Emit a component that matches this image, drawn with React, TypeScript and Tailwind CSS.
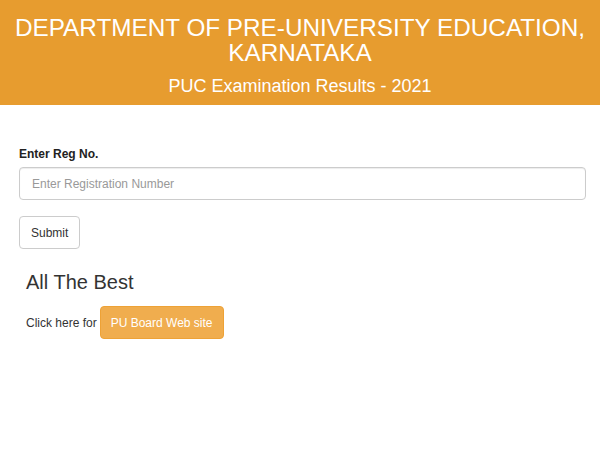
import React from "react";

export default function App() {
  return (
    <div className="w-[600px] h-[450px] bg-white font-['Liberation_Sans',Arial,sans-serif] text-[#333]">
      <header className="bg-[#e79c2f] text-white text-center pt-[15px] pb-[9px]">
        <h1 className="text-[24.3px] leading-[25px] font-normal">
          DEPARTMENT OF PRE-UNIVERSITY EDUCATION, KARNATAKA
        </h1>
        <p className="mt-[11px] text-[18px] leading-[20px]">PUC Examination Results - 2021</p>
      </header>

      <main className="pl-[19px] pr-[14px]">
        <label className="block mt-[41px] text-[12px] leading-[16px] font-bold text-[#222]">
          Enter Reg No.
        </label>
        <input
          type="text"
          placeholder="Enter Registration Number"
          className="mt-[5px] block w-full h-[33px] px-[12px] text-[12px] border border-[#ccc] rounded-[4px] shadow-[inset_0_1px_1px_rgba(0,0,0,0.075)] placeholder:text-[#999] outline-none"
        />
        <button className="mt-[16px] block h-[33px] px-[11px] text-[12px] text-[#333] bg-white border border-[#ccc] rounded-[4px]">
          Submit
        </button>
        <div className="pl-[7px]">
          <h2 className="mt-[21px] text-[20px] leading-[24px] font-normal text-[#333]">All The Best</h2>
          <div className="mt-[12px] flex items-center gap-[3px] text-[12px]">
            <span>Click here for</span>
            <a className="h-[33px] px-[10px] flex items-center bg-[#f0ad4e] text-white rounded-[4px] border border-[#eea236]">
              PU Board Web site
            </a>
          </div>
        </div>
      </main>
    </div>
  );
}
